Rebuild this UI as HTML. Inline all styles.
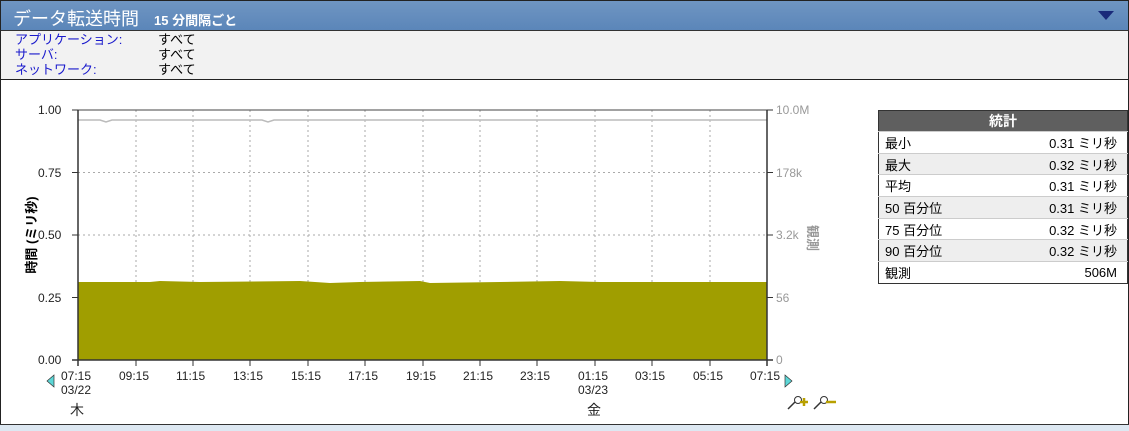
<!DOCTYPE html>
<html><head><meta charset="utf-8"><style>
*{margin:0;padding:0;box-sizing:border-box}
body{width:1129px;height:431px;background:#fff;font-family:"Liberation Sans","Noto Sans CJK JP",sans-serif;position:relative;overflow:hidden}
.frame{position:absolute;left:0;top:0;width:1129px;height:425px;border-left:1px solid #222;border-right:1px solid #222}
.hdr{position:absolute;left:0;top:0;width:1129px;height:31px;background:linear-gradient(#6f95c2,#5b86b9);border:1px solid #222;border-bottom:1px solid #333;color:#fff}
.hdr .t{position:absolute;left:12px;top:4px;font-size:18px}
.hdr .s{position:absolute;left:153px;top:9px;font-size:13px;font-weight:bold}
.flt{position:absolute;left:0;top:31px;width:1129px;height:49px;background:#f2f2f2;border-left:1px solid #222;border-right:1px solid #222;border-bottom:1px solid #222;font-size:13px;line-height:13px}
.flt .l{position:absolute;left:14px;color:#1a1acc}
.flt .v{position:absolute;left:157px;color:#000}
.ax{position:absolute;font-size:12px;color:#222}
.ar{position:absolute;font-size:12px;color:#999}
table{position:absolute;left:878px;top:110px;width:250px;border-collapse:collapse;border:1px solid #333;font-size:13px}
th{background:#5f5f5f;color:#fff;height:21px;font-size:14px}
td{height:21.7px;padding:0 6px;border-top:1px solid #ccc}
td+td{text-align:right;padding-right:10px}
tr:nth-child(odd) td{background:#eee}
.bot{position:absolute;left:0;top:424px;width:1129px;height:7px;background:#dde8f2;border-top:1px solid #333}
</style></head><body>
<div class="frame"></div>
<div class="hdr"><span class="t">データ転送時間</span><span class="s">15 分間隔ごと</span>
<svg style="position:absolute;left:1096px;top:9px" width="18" height="12"><polygon points="1,1 17,1 9,10" fill="#1a2a7a"/></svg></div>
<div class="flt">
<span class="l" style="top:2px">アプリケーション:</span><span class="v" style="top:2px">すべて</span>
<span class="l" style="top:17px">サーバ:</span><span class="v" style="top:17px">すべて</span>
<span class="l" style="top:32px">ネットワーク:</span><span class="v" style="top:32px">すべて</span>
</div>
<svg style="position:absolute;left:0;top:0" width="1129" height="431">
<g stroke="#aaa" stroke-dasharray="2,3" stroke-width="1">
<line x1="78" y1="172.5" x2="767" y2="172.5"/><line x1="78" y1="235" x2="767" y2="235"/><line x1="78" y1="297.5" x2="767" y2="297.5"/>
<line x1="136" y1="110" x2="136" y2="360"/><line x1="193" y1="110" x2="193" y2="360"/><line x1="250" y1="110" x2="250" y2="360"/><line x1="308" y1="110" x2="308" y2="360"/><line x1="365" y1="110" x2="365" y2="360"/><line x1="423" y1="110" x2="423" y2="360"/><line x1="480" y1="110" x2="480" y2="360"/><line x1="537" y1="110" x2="537" y2="360"/><line x1="595" y1="110" x2="595" y2="360"/><line x1="652" y1="110" x2="652" y2="360"/><line x1="710" y1="110" x2="710" y2="360"/>
</g>
<line x1="78" y1="110" x2="767" y2="110" stroke="#444"/>
<polyline points="78,120 100,120 106,122 112,120 262,120 268,122 274,120 767,120" fill="none" stroke="#bbb" stroke-width="1.5"/>
<polygon points="78,282 150,282 160,281 200,282 300,281 330,283 360,282 420,281 430,283 500,282 560,281 600,282 767,282 767,360 78,360" fill="#a09e00"/>
<g stroke="#333" stroke-width="1.5"><line x1="78" y1="110" x2="78" y2="366"/><line x1="767" y1="110" x2="767" y2="366"/><line x1="72" y1="360" x2="773" y2="360"/></g>
<g stroke="#333"><line x1="72" y1="110" x2="78" y2="110"/><line x1="72" y1="172.5" x2="78" y2="172.5"/><line x1="72" y1="235" x2="78" y2="235"/><line x1="72" y1="297.5" x2="78" y2="297.5"/>
<line x1="767" y1="110" x2="773" y2="110"/><line x1="767" y1="172.5" x2="773" y2="172.5"/><line x1="767" y1="235" x2="773" y2="235"/><line x1="767" y1="297.5" x2="773" y2="297.5"/>
<line x1="136" y1="360" x2="136" y2="366"/><line x1="193" y1="360" x2="193" y2="366"/><line x1="250" y1="360" x2="250" y2="366"/><line x1="308" y1="360" x2="308" y2="366"/><line x1="365" y1="360" x2="365" y2="366"/><line x1="423" y1="360" x2="423" y2="366"/><line x1="480" y1="360" x2="480" y2="366"/><line x1="537" y1="360" x2="537" y2="366"/><line x1="595" y1="360" x2="595" y2="366"/><line x1="652" y1="360" x2="652" y2="366"/><line x1="710" y1="360" x2="710" y2="366"/></g>
<polygon points="54,375 47,381 54,387" fill="#5cd6d6" stroke="#333" stroke-width=".7"/>
<polygon points="785,375 792,381 785,387" fill="#5cd6d6" stroke="#333" stroke-width=".7"/>
<g stroke="#333" stroke-width="1.5" fill="none"><line x1="788" y1="409" x2="796" y2="401"/><line x1="814" y1="409" x2="822" y2="401"/></g>
<circle cx="798" cy="400" r="3.5" fill="#fff" stroke="#333"/><circle cx="824" cy="400" r="3.5" fill="#fff" stroke="#333"/>
<path d="M800 402h8M804 398v8" stroke="#b8a000" stroke-width="2.5"/><path d="M826 402h10" stroke="#b8a000" stroke-width="2.5"/>
<text x="0" y="0" transform="translate(36,235) rotate(-90)" text-anchor="middle" font-size="13" font-weight="bold" font-family="Liberation Sans,Noto Sans CJK JP,sans-serif">時間 (ミリ秒)</text>
<text x="0" y="0" transform="translate(808,238) rotate(90)" text-anchor="middle" font-size="13" font-weight="bold" fill="#999" font-family="Liberation Sans,Noto Sans CJK JP,sans-serif">観測</text>
</svg>
<span class="ax" style="left:38px;top:103px">1.00</span><span class="ax" style="left:38px;top:166px">0.75</span><span class="ax" style="left:38px;top:228px">0.50</span><span class="ax" style="left:38px;top:291px">0.25</span><span class="ax" style="left:38px;top:353px">0.00</span>
<span class="ar" style="left:776px;top:103px">10.0M</span><span class="ar" style="left:776px;top:166px">178k</span><span class="ar" style="left:776px;top:228px">3.2k</span><span class="ar" style="left:776px;top:291px">56</span><span class="ar" style="left:776px;top:353px">0</span>
<span class="ax" style="left:61px;top:369px">07:15<br>03/22</span><span class="ax" style="left:70px;top:400px;font-size:14px">木</span>
<span class="ax" style="left:119px;top:369px">09:15</span><span class="ax" style="left:176px;top:369px">11:15</span><span class="ax" style="left:233px;top:369px">13:15</span><span class="ax" style="left:291px;top:369px">15:15</span><span class="ax" style="left:348px;top:369px">17:15</span><span class="ax" style="left:406px;top:369px">19:15</span><span class="ax" style="left:463px;top:369px">21:15</span><span class="ax" style="left:520px;top:369px">23:15</span>
<span class="ax" style="left:578px;top:369px">01:15<br>03/23</span><span class="ax" style="left:587px;top:400px;font-size:14px">金</span>
<span class="ax" style="left:635px;top:369px">03:15</span><span class="ax" style="left:693px;top:369px">05:15</span><span class="ax" style="left:750px;top:369px">07:15</span>
<table>
<tr><th colspan="2">統計</th></tr>
<tr><td>最小</td><td>0.31 ミリ秒</td></tr>
<tr><td>最大</td><td>0.32 ミリ秒</td></tr>
<tr><td>平均</td><td>0.31 ミリ秒</td></tr>
<tr><td>50 百分位</td><td>0.31 ミリ秒</td></tr>
<tr><td>75 百分位</td><td>0.32 ミリ秒</td></tr>
<tr><td>90 百分位</td><td>0.32 ミリ秒</td></tr>
<tr><td>観測</td><td>506M</td></tr>
</table>
<div class="bot"></div>
</body></html>
